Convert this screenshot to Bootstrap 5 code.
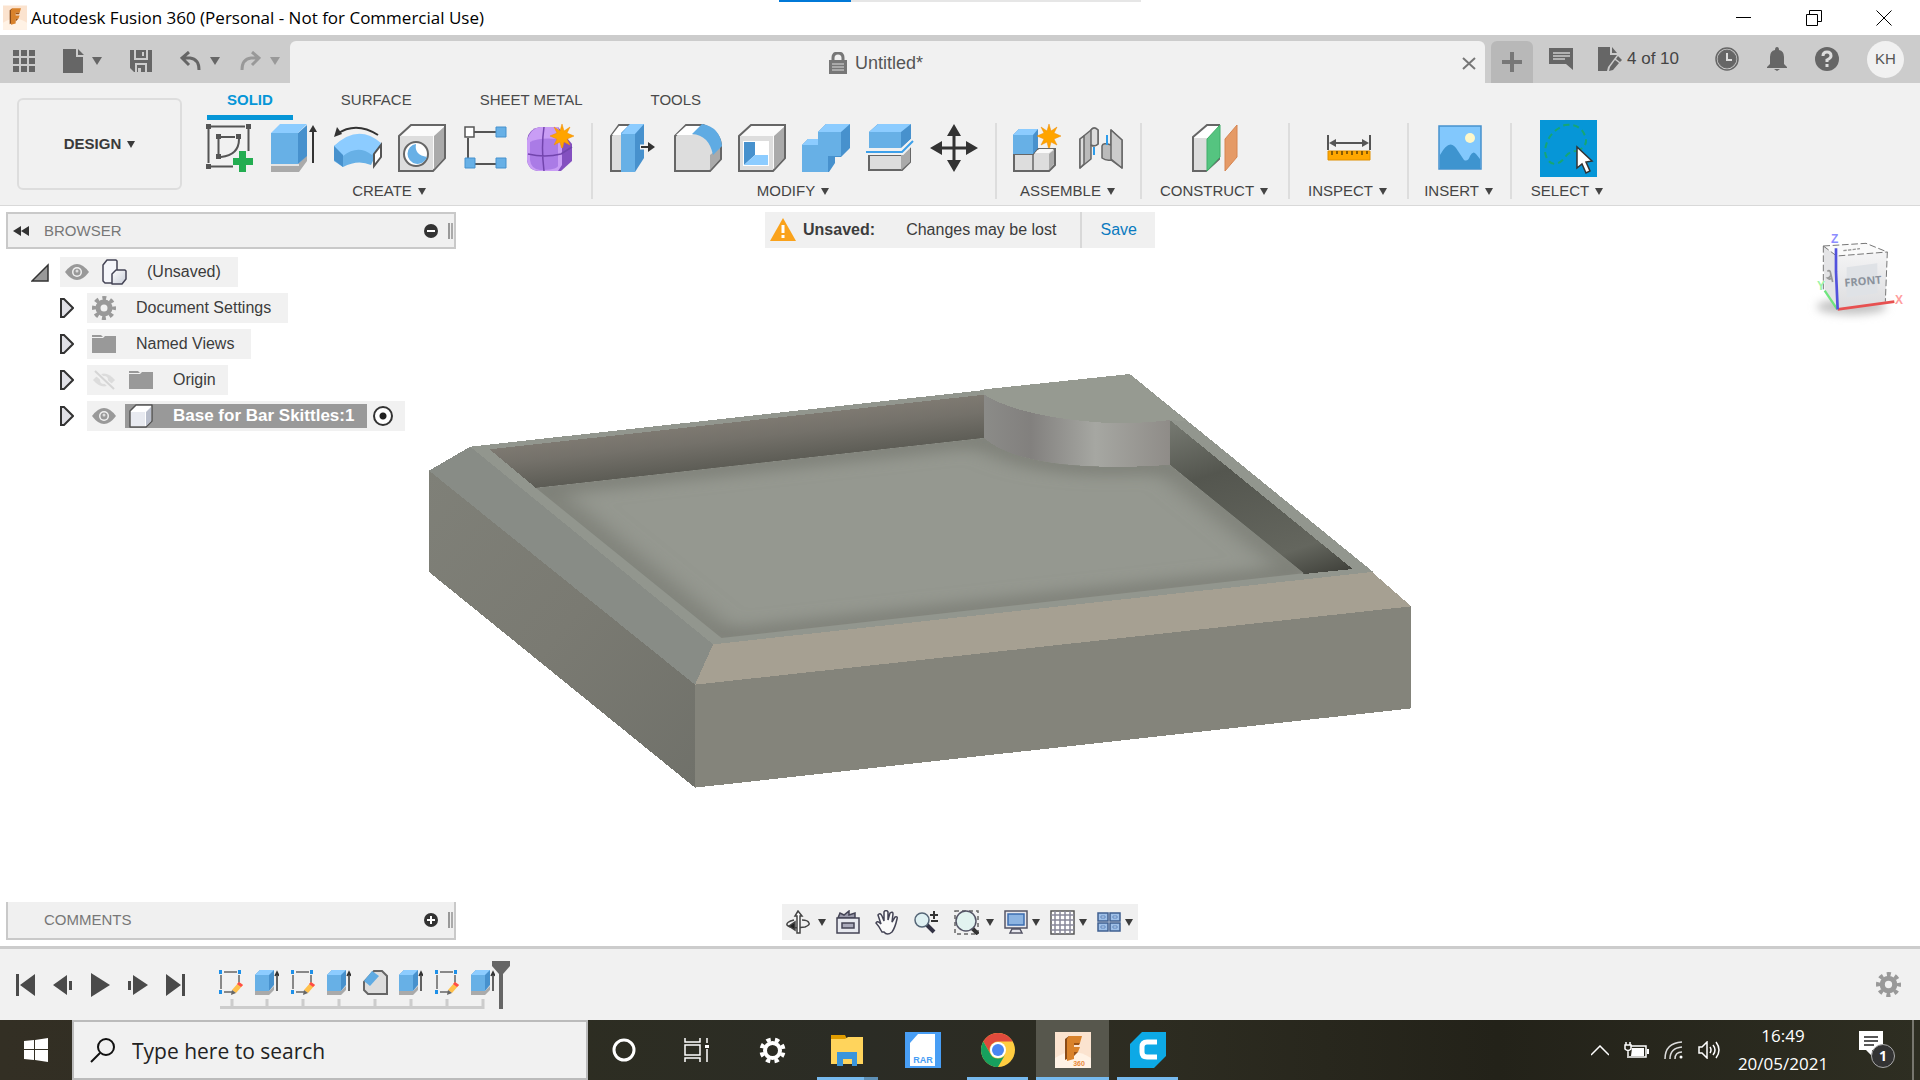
<!DOCTYPE html>
<html lang="en">
<head>
<meta charset="utf-8">
<meta name="viewport" content="width=device-width, initial-scale=1">
<title>Autodesk Fusion 360</title>
<link href="https://cdn.jsdelivr.net/npm/bootstrap@5.3.0/dist/css/bootstrap.min.css" rel="stylesheet">
<style>
body{font-family:"Liberation Sans",Arial,sans-serif;font-size:16px;line-height:20px;color:#3c3c3c;background:#fff;overflow:hidden}
button{border:0;background:none;padding:0;color:inherit;font:inherit;line-height:20px}
svg{display:block;flex:none}
.titlebar{height:35px;font-family:"Open Sans","Noto Sans",sans-serif;font-size:17px;color:#000;padding:0 28px 0 3px}
.loadline{left:779px;width:362px;height:2px;background:#e6e6e6}
.loadline i{display:block;width:72px;height:2px;background:#0078d7}
.winbtns{gap:54px}
.strip{height:48px;background:#ccc;color:#666}
.quick{width:290px;padding:4px 11px 0 12px;gap:28px}
.doctab{margin-top:6px;background:#f1f1f1;border-radius:6px 6px 0 0;font-size:18px;color:#555;padding:2px 9px 0 0}
.plustab{width:42px;height:42px;background:#b8b8b8;border-radius:6px 6px 0 0;margin:6px 16px 0 6px}
.status{gap:28px;padding-right:16px}
.avatar{width:37px;height:37px;background:#f1f1f1;font-size:15px;color:#555}
.ribbon{height:123px;background:#f1f1f1;border-bottom:1px solid #d9d9d9}
.workspace{width:165px;height:92px;margin:15px 5px 0 17px;border:2px solid #ddd;border-radius:6px;font-weight:700;font-size:15px;color:#3a3a3a}
.modes{height:37px;padding-left:20px;gap:28px;font-size:15px;align-items:flex-end}
.modes a{padding:1px 20px 0;line-height:20px;color:#4a4a4a;text-decoration:none;border-bottom:5px solid transparent;display:block;height:31px}
.modes a.on{color:#0696d7;font-weight:700;border-color:#0696d7}
.groups{display:grid;grid-template-columns:404px 404px 145px 148px 119px 103px 114px}
.grp{position:relative}
.grp + .grp::before{content:"";position:absolute;left:0;top:3px;height:76px;width:2px;background:#ddd}
.tools{height:56px;padding-left:2px}
.tools > button{width:64px;height:56px;display:flex;align-items:center;justify-content:center}
.grp > .menu{height:20px;margin-top:5px;font-size:15px;color:#444}
.menu{display:flex;align-items:center;justify-content:center;gap:6px}
.arr{width:0;height:0;border:4px solid transparent;border-top:7px solid currentColor;border-bottom:0;flex:none}
.tools > .picked{background:#0696d7;width:57px;height:57px}
.view{display:grid;grid-template-columns:1fr auto 1fr;padding:6px 0;overflow:hidden}
.model{left:420px;top:154px;z-index:0}
.panelbar{width:450px;height:37px;background:#f0f0f0;border:2px solid #c9c9c9;color:#777;font-size:15px;padding:0 1px 0 5px;margin-left:6px}
.comments{border-top:0;height:38px}
.grip{width:5px;height:16px;border-left:2px solid #999;border-right:2px solid #aaa;margin-left:10px}
.tree{gap:6px;margin-top:8px}
.tree .rowx{display:flex;align-items:center;height:30px;padding-left:60px}
.tree .root{padding-left:31px}
.tag{background:#f1f1f1;height:30px;display:flex;align-items:center;padding-left:5px}
.tw{width:27px}
.sel{background:#999;color:#fff;font-weight:700;font-size:17px;height:24px;display:flex;align-items:center;padding:0 13px 0 4px;margin-left:9px;margin-right:6px}
.dot{appearance:none;width:20px;height:20px;margin:0 12px 0 0;border:2px solid #333;border-radius:50%;background:radial-gradient(#222 0 3px,#fff 4px)}
.notice{width:390px;height:36px;background:#f0f0f0}
.notice a{color:#0a7abf;text-decoration:none;border-left:2px solid #d8d8d8;height:36px;line-height:36px;padding:0 18px 0 19px}
.navtools{height:36px;width:356px;background:#f0f0f0;padding:0 6px 0 4px;gap:10px}
.navtools .wide{margin-right:5px}
.navtools .arr{border-width:7px 4px 0}
.strip .arr{border-width:8px 5px 0}
.timeline{height:74px;background:#f1f1f1;border-top:3px solid #ccc;padding:0 19px 0 16px}
.play{gap:18px;width:203px;padding-top:1px}
.taskbar{height:60px;background:linear-gradient(90deg,#332f24,#2d2d22 30%,#2b2c25 45%,#2d2c21 60%,#232219 78%,#2e2e22);font-family:"Open Sans","Noto Sans",sans-serif;color:#fff}
.startb{width:72px}
.find{width:516px;height:60px;background:#f1f1f1;border:2px solid #bbb;padding-left:16px;gap:17px}
.find input{border:0;background:none;outline:0;font-size:21px;color:#222;min-width:0;padding:2px 0 0}
.find input::placeholder{color:#222;opacity:1}
.app{width:75px;height:60px;display:flex;align-items:center;justify-content:center;position:relative}
.app.sm{width:72px}
.app.run::after{content:"";position:absolute;bottom:0;left:7px;right:7px;height:3px;background:#76b9ed}
.app.multi::after{background:linear-gradient(90deg,#76b9ed 77%,#5d8fb5 77%)}
.app.cur{background:#57574d;width:73px;margin:0 1px}
.app.cur::after{left:0;right:0}
.clock{font-size:17px;line-height:28px;width:92px;margin:0 30px 0 16px}
.peek{width:8px;height:60px;border-left:2px solid #77766e;margin-left:17px}
</style>
<script src="https://cdn.jsdelivr.net/npm/bootstrap@5.3.0/dist/js/bootstrap.bundle.min.js"></script>
</head>
<body class="vh-100 d-flex flex-column">
<svg width="0" height="0" class="position-absolute">
<defs>
<linearGradient id="gb" x1="0" y1="0" x2="1" y2="1"><stop offset="0" stop-color="#fff"/><stop offset="1" stop-color="#c8cdd8"/></linearGradient>
<symbol id="gear" viewBox="0 0 24 24"><g fill="none" stroke="currentColor"><circle cx="12" cy="12" r="6" stroke-width="5"/><circle cx="12" cy="12" r="10" stroke-width="4" stroke-dasharray="3.927" stroke-dashoffset="1.960"/></g></symbol>
<symbol id="eye" viewBox="0 0 24 18"><path d="M0 9Q12-7 24 9Q12 25 0 9Z" fill="#999"/><circle cx="12" cy="9" r="5" fill="#f1f1f1"/><circle cx="12" cy="9" r="3.500" fill="#999"/><circle cx="12" cy="8" r="1.500" fill="#ddd"/></symbol>
<symbol id="folder" viewBox="0 0 24 20"><path d="M0 1h9l2 2H0zM0 4h11l2-2h11v17H0z" fill="#999"/></symbol>
<symbol id="cube" viewBox="0 0 24 24"><path d="M1 7L7 1h16v16l-6 6H1z" fill="#fff" stroke="#555" stroke-width="1.500" stroke-linejoin="round"/><path d="M2 8h14v14H2z" fill="#e8eaf0"/><path d="M17 8l5-5v14l-5 5z" fill="#b9becb"/></symbol>
<symbol id="twist" viewBox="0 0 14 20"><path d="M1 1h3l9 9-9 9H1z" fill="#e0e0e6" stroke="#333" stroke-width="2"/></symbol>
<symbol id="star" viewBox="0 0 24 24"><path d="M12 0l2 7 6-4-3 6 7 3-7 3 3 6-6-3-2 8-2-8-6 3 3-6-7-3 7-3-3-6 6 4z" fill="#ffa400" stroke="#f08a00" stroke-width=".5"/></symbol>
<symbol id="tsk" viewBox="0 0 24 25"><path d="M5 2h13M2 5v14M20 5v10M5 22h8" stroke="#666" stroke-width="1.500" fill="none"/><path d="M0 0h3v4H0zM19 0h3v4h-3zM0 20h3v4H0z" fill="#1e90e8"/><path d="M20 12l4 3-7 8-4-3z" fill="#ffc04a"/><path d="M20 12l4 3-2 2-4-3z" fill="#ff4b4b"/><path d="M13 20l4 3-5 2z" fill="#666"/></symbol>
<symbol id="tex" viewBox="0 0 24 25"><path d="M0 21h14l5-5v4l-5 5H0z" fill="#aaa"/><path d="M0 5l5-5h14v15l-5 6H0z" fill="#4791cd"/><path d="M0 5h14v16H0z" fill="#67b0e6"/><path d="M0 5l5-5h14l-5 5z" fill="#8cccff"/><path d="M22 3v18M20 6l2-4 2 4" stroke="#333" stroke-width="1.500" fill="none"/></symbol>
<symbol id="fus" viewBox="0 0 36 36"><path d="M0 0h36v36H0z" fill="#fbe3cf"/><path d="M0 26Q18 14 36 26V36H0z" fill="#fff2e5"/><path d="M10 7l4-3v22l-4 2z" fill="#8a4b18"/><path d="M14 4h13l-2 7h-6v4h6l-2 5h-4v7l-7 2V7z" fill="#d9822b"/><path d="M19 11h6l-1 2h-5zM19 20h4l-4 4z" fill="#9c5316"/></symbol>
</defs>
</svg>

<header class="titlebar d-flex align-items-center position-relative">
<svg width="24" height="25" class="me-1"><use href="#fus"/></svg>
<span>Autodesk Fusion 360 (Personal - Not for Commercial Use)</span>
<div class="loadline position-absolute top-0"><i></i></div>
<div class="winbtns ms-auto d-flex">
<button aria-label="Minimise"><svg width="16" height="16"><path d="M0 7.500h15" stroke="#000"/></svg></button>
<button aria-label="Restore"><svg width="16" height="16" fill="none" stroke="#000"><path d="M.5 4.500h11v11H.5zM3.500 4V.5h12v11H12"/></svg></button>
<button aria-label="Close"><svg width="16" height="16"><path d="M.5.5l15 15M15.500.5l-15 15" stroke="#000"/></svg></button>
</div>
</header>

<div class="strip d-flex">
<div class="quick d-flex align-items-center">
<button aria-label="Data panel"><svg width="23" height="22" fill="#666"><path d="M1 0h6v6H1zM9 0h6v6H9zM17 0h6v6h-6zM1 8h6v6H1zM9 8h6v6H9zM17 8h6v6h-6zM1 16h6v6H1zM9 16h6v6H9zM17 16h6v6h-6z"/></svg></button>
<button class="d-flex align-items-center" style="gap:8px" aria-label="File"><svg width="21" height="24" fill="#666"><path d="M0 0h13v8h7v16H0zM15 0l6 6h-6z"/></svg><i class="arr"></i></button>
<button aria-label="Save"><svg width="22" height="22"><path d="M0 0h22v22H4l-4-4z" fill="#666"/><path d="M5 0v9h12V0M6 22v-8h10v8" stroke="#ccc" stroke-width="2" fill="none"/><path d="M12 2h2v4h-2zM8 18h3v4H8z" fill="#ccc"/></svg></button>
<div class="d-flex" style="gap:20px">
<button class="d-flex align-items-center" style="gap:9px" aria-label="Undo"><svg width="21" height="20" fill="none" stroke="#666" stroke-width="3"><path d="M9 1L2 7l7 7M2 7h8q9 1 9 12"/></svg><i class="arr"></i></button>
<button class="d-flex align-items-center" style="gap:9px;color:#999" aria-label="Redo"><svg width="21" height="20" fill="none" stroke="#999" stroke-width="3"><path d="M12 1l7 6-7 7M19 7h-8Q2 8 2 19"/></svg><i class="arr"></i></button>
</div>
</div>
<div class="doctab flex-grow-1 d-flex align-items-center">
<div class="flex-grow-1 d-flex align-items-center justify-content-center gap-2">
<svg width="18" height="22"><path d="M4 9V6q0-5 5-5t5 5v3" fill="none" stroke="#777" stroke-width="3"/><path d="M0 8h18v14H0z" fill="#777"/><path d="M3 12h12M3 15h12M3 18h12" stroke="#ddd"/></svg><span>Untitled*</span></div>
<button aria-label="Close tab"><svg width="14" height="13"><path d="M1 1l12 11M13 1L1 12" stroke="#777" stroke-width="2"/></svg></button>
</div>
<button class="plustab d-flex align-items-center justify-content-center" aria-label="New tab"><svg width="20" height="20"><path d="M10 0v20M0 10h20" stroke="#777" stroke-width="4"/></svg></button>
<div class="status d-flex align-items-center">
<svg width="24" height="24" style="margin-right:-3px"><path d="M0 1h24v22l-7-6H0z" fill="#666"/><path d="M4 6h17M4 9h17M4 12h12" stroke="#ccc" stroke-width="1.500"/></svg>
<span class="d-flex align-items-center" style="gap:5px;font-size:17px;color:#444;margin-right:8px"><svg width="24" height="25" fill="#666"><path d="M0 0h12v8h7l-9 12-1 4H0zM14 0l5 6h-5zM20 9l4 4-2 2-4-3zM17 13l4 3-6 7-4 1 1-4z"/></svg>4 of 10</span>
<svg width="24" height="24" fill="none" stroke="#666"><circle cx="12" cy="12" r="11" stroke-width="1.500"/><circle cx="12" cy="12" r="9" fill="#666"/><path d="M12 6v7h5" stroke="#ddd" stroke-width="2"/></svg>
<svg width="20" height="24" fill="#666"><path d="M10 0q2 0 2 3 5 1 5 7v7l3 3v1H0v-1l3-3v-7q0-6 5-7 0-3 2-3zM7 22h6l-3 2z"/></svg>
<svg width="24" height="24"><circle cx="12" cy="12" r="12" fill="#666"/><path d="M8 9q0-4 4-4t4 4q0 2-4 4v2M12 17v3" fill="none" stroke="#ddd" stroke-width="3"/></svg>
<div class="avatar rounded-circle d-flex align-items-center justify-content-center">KH</div>
</div>
</div>

<div class="ribbon d-flex">
<button class="workspace menu"><span>DESIGN</span><i class="arr"></i></button>
<div>
<nav class="modes d-flex"><a href="#" class="on">SOLID</a><a href="#">SURFACE</a><a href="#">SHEET METAL</a><a href="#">TOOLS</a></nav>
<div class="groups">
<div class="grp">
<div class="tools d-flex justify-content-center">
<button aria-label="Create sketch"><svg width="48" height="48"><path d="M5 2.500h34M2.500 5v34M42.500 5v22M5 42.500h22M15 13h14M12.500 15v17M33 15q0 16-18 18" stroke="#555" stroke-width="2" fill="none"/><path d="M0 0h5v5H0zM40 0h5v5h-5zM0 40h5v5H0zM10 10h5v5h-5zM30 10h5v5h-5zM10 30h5v5h-5z" fill="#555"/><path d="M33 27h7v7h7v7h-7v7h-7v-7h-6v-7h6z" fill="#23ad51"/></svg></button>
<button aria-label="Extrude"><svg width="48" height="48"><path d="M1 40h27l9-9v6l-8 11H1z" fill="#aaa"/><path d="M1 40h28v2H1z" fill="#e4e4e4"/><path d="M28 9l9-8v31l-9 8z" fill="#4791cd"/><path d="M1 9h27v31H1z" fill="#67b0e6"/><path d="M1 9l9-9h27l-9 9z" fill="#8cccff"/><path d="M43 6v33" stroke="#333" stroke-width="2"/><path d="M43 1l4 7h-8z" fill="#333"/></svg></button>
<button aria-label="Revolve"><svg width="48" height="48"><path d="M0 22Q24 2 47 20L37 41Q24 35 9 43L0 37z" fill="#67b0e6"/><path d="M0 22Q24-1 47 19L38 31Q24 20 9 32z" fill="#8cccff"/><path d="M0 22l9 9v12l-9-7z" fill="#4791cd"/><path d="M40 30l7-9v12l-7 9z" fill="#fff" stroke="#555" stroke-width="2"/><path d="M3 10Q22-3 44 11" fill="none" stroke="#333" stroke-width="2"/><path d="M0 13l3-10 5 7z" fill="#333"/></svg></button>
<button aria-label="Hole"><svg width="48" height="48"><path d="M1 12L13 1h34v33L35 47H1z" fill="#fafafa" stroke="#666" stroke-width="2"/><path d="M2 12h33v34H2z" fill="#ddd"/><path d="M36 12L46 3v31L36 45z" fill="#aaa"/><circle cx="18" cy="30" r="12" fill="#fff" stroke="#666" stroke-width="2"/><path d="M18 20q-2 11 11 13a10 10 0 1 1-11-13z" fill="#67b0e6"/></svg></button>
<button aria-label="Pattern"><svg width="48" height="48"><path d="M12 8h24M6 14v22M12 40h24" stroke="#555" stroke-width="2"/><path d="M3 3h9v10H3z" fill="#fff" stroke="#555" stroke-width="1.500"/><path d="M34 3h10v10H34zM3 34h10v10H3zM34 34h10v10H34z" fill="#67b0e6" stroke="#4791cd"/></svg></button>
<button aria-label="Create form"><svg width="48" height="48"><path d="M1 16Q2 5 14 3h18l14 17v17L35 47H12Q2 46 1 36z" fill="#8450c0"/><path d="M1 16Q5 4 14 3h18l4 10v28l-4 6H12Q2 46 1 36z" fill="#c99df5"/><path d="M4 18q9-5 28-3v27q-2 4-18 4-9-1-10-10z" fill="#aa7be6"/><path d="M18 3q-3 20 0 44M2 30q17 4 33 0l11-7" stroke="#7245ad" stroke-width="1.500" fill="none"/><svg x="24" y="0" width="24" height="24"><use href="#star"/></svg></svg></button>
</div>
<button class="menu w-100">CREATE<i class="arr"></i></button>
</div>
<div class="grp">
<div class="tools d-flex justify-content-center">
<button aria-label="Press pull"><svg width="48" height="48"><path d="M1 12L9 1h15L14 47H1z" fill="#ddd" stroke="#666" stroke-width="2"/><path d="M2 11l7-9h12l-8 9z" fill="#fff"/><path d="M11 9l9-9h14v34L25 48H11z" fill="#4791cd"/><path d="M11 10h14v38H11z" fill="#67b0e6"/><path d="M11 10l9-10h14l-9 10z" fill="#8cccff"/><path d="M30 23h11" stroke="#f1f1f1" stroke-width="5"/><path d="M31 23h10" stroke="#333" stroke-width="2"/><path d="M38 18l7 5-7 5z" fill="#333"/></svg></button>
<button aria-label="Fillet"><svg width="48" height="48"><path d="M1 12L12 1h17q18 7 18 22v12L36 47H1z" fill="#ddd" stroke="#666" stroke-width="2"/><path d="M36 31l10-8v12L36 46z" fill="#aaa"/><path d="M2 11L12 2h15l-9 9z" fill="#fff"/><path d="M18 10L28 0q18 3 20 22l-9 9Q35 11 18 10z" fill="#5fabe3"/></svg></button>
<button aria-label="Shell"><svg width="48" height="48"><path d="M1 12L13 1h34v33L35 47H1z" fill="#fafafa" stroke="#666" stroke-width="2"/><path d="M2 12h33v34H2z" fill="#ddd"/><path d="M36 12L46 3v31L36 45z" fill="#aaa"/><path d="M5 17h26v25H5z" fill="#fff"/><path d="M6 18h11v13L6 41z" fill="#4791cd"/><path d="M17 31h13v10H6z" fill="#8cccff"/></svg></button>
<button aria-label="Combine"><svg width="48" height="48"><path d="M0 21l6-6h10V8l8-8h24v24l-9 9h-6v6l-6 9H0z" fill="#4791cd"/><path d="M0 21h16V8h23v24H26v16H0z" fill="#67b0e6"/><path d="M16 8l8-8h24l-9 8zM0 21l6-6h10v6z" fill="#8cccff"/></svg></button>
<button aria-label="Split body"><svg width="48" height="48"><path d="M3 31h32l9-9v16l-8 8H3z" fill="#ddd" stroke="#666" stroke-width="2"/><path d="M35 31l9-8v15l-9 8z" fill="#aaa"/><path d="M3 8l9-8h33v15l-10 9H3z" fill="#4791cd"/><path d="M3 8h32v16H3z" fill="#67b0e6"/><path d="M3 8l9-8h33l-10 8z" fill="#8cccff"/><path d="M0 28h36l11-11" fill="none" stroke="#f1f1f1" stroke-width="6"/><path d="M0 28h36l11-11" fill="none" stroke="#3da0ea" stroke-width="2"/></svg></button>
<button aria-label="Move"><svg width="48" height="48"><path d="M24 6v36M6 24h36" stroke="#333" stroke-width="3"/><path d="M24 0l7 12H17zM24 48l7-12H17zM0 24l12-7v14zM48 24l-12-7v14z" fill="#333"/></svg></button>
</div>
<button class="menu w-100">MODIFY<i class="arr"></i></button>
</div>
<div class="grp">
<div class="tools d-flex justify-content-center">
<button aria-label="New component"><svg width="48" height="48"><path d="M1 30h19l4-5h18v16l-6 6H1z" fill="#ddd" stroke="#666" stroke-width="2"/><path d="M20 30v17" stroke="#666" stroke-width="1.500"/><path d="M36 30l5-4v14l-5 6z" fill="#aaa"/><path d="M22 29l4-4h15l-5 4z" fill="#fafafa"/><path d="M0 11l6-6h19v19l-5 6H0z" fill="#4791cd"/><path d="M0 11h20v19H0z" fill="#67b0e6"/><path d="M0 11l6-6h19l-5 6z" fill="#8cccff"/><svg x="24" y="0" width="24" height="24"><use href="#star"/></svg></svg></button>
<button aria-label="Joint"><svg width="48" height="48"><g stroke="#666" stroke-width="1.500" stroke-linejoin="round"><path d="M3 15L14 6q3-4 7 0v14q-3 3-7 1v14L3 44z" fill="#bbb"/><path d="M3 15l4-3v28l-4 4z" fill="#ddd"/><path d="M14 6q3-4 7 0v14q-3 3-7 1z" fill="#ddd"/><path d="M45 16L34 6v15q-8-3-9 1v12q4 3 9 2l11 8z" fill="#bbb"/><path d="M34 6l11 10v28l-11-9z" fill="#ccc"/></g><path d="M17 23v8M30 11v10" stroke="#2d9cea" stroke-width="2"/></svg></button>
</div>
<button class="menu w-100">ASSEMBLE<i class="arr"></i></button>
</div>
<div class="grp">
<div class="tools d-flex justify-content-center">
<button aria-label="Offset plane"><svg width="46" height="48"><path d="M1 13L15 1h12v34L14 47H1z" fill="#fff" stroke="#666" stroke-width="2"/><path d="M2 14h13v32H2z" fill="#ddd"/><path d="M15 15L28 1v32L15 47z" fill="#55c480" stroke="#3fae68"/><path d="M33 15L45 1v32L33 47z" fill="#e59a66" stroke="#d68450"/></svg></button>
</div>
<button class="menu w-100">CONSTRUCT<i class="arr"></i></button>
</div>
<div class="grp">
<div class="tools d-flex justify-content-center">
<button aria-label="Measure"><svg width="44" height="48"><path d="M1 11v15M43 11v15M4 19h36" stroke="#555" stroke-width="2"/><path d="M2 19l7-4v8zM42 19l-7-4v8z" fill="#555"/><path d="M1 27h42v9H1z" fill="#ffa700" stroke="#e08f00"/><path d="M5 27v4M10 27v3M15 27v4M20 27v3M25 27v4M30 27v3M35 27v4M40 27v3" stroke="#664400" stroke-width="1.500"/></svg></button>
</div>
<button class="menu w-100">INSPECT<i class="arr"></i></button>
</div>
<div class="grp">
<div class="tools d-flex justify-content-center">
<button aria-label="Insert image"><svg width="44" height="46"><path d="M1 1h42v43H1z" fill="#82c8fd" stroke="#4791cd" stroke-width="1.500"/><circle cx="32" cy="13" r="5" fill="#fdf7c9"/><path d="M2 30Q12 11 20 26l6 9q4 2 6-4 3-6 6-2l4 5v10H2z" fill="#3e94cf"/></svg></button>
</div>
<button class="menu w-100">INSERT<i class="arr"></i></button>
</div>
<div class="grp">
<div class="tools d-flex justify-content-center">
<button class="picked" aria-label="Select"><svg width="57" height="57"><path d="M37 31q10-4 9-12Q42 3 25 5 6 13 5 32q2 12 11 12 6-2 10-8 4-5 11-5z" fill="none" stroke="#17a673" stroke-width="2" stroke-dasharray="6 4"/><path d="M37 27v21l5-4 4 9 4-2-4-9 6-1z" fill="#fff" stroke="#333" stroke-width="1.500"/></svg></button>
</div>
<button class="menu w-100">SELECT<i class="arr"></i></button>
</div>
</div>
</div>
</div>

<main class="view flex-grow-1 position-relative">
<svg class="model position-absolute" width="1010" height="440" viewBox="0 0 1568 1320" preserveAspectRatio="none" shape-rendering="crispEdges">
<defs>
<linearGradient id="m1" x1="0" y1="0" x2="1" y2="1"><stop offset="0" stop-color="#7f8078"/><stop offset=".5" stop-color="#7a7a72"/><stop offset="1" stop-color="#70716a"/></linearGradient>
<linearGradient id="m2" gradientUnits="userSpaceOnUse" x1="470" y1="180" x2="500" y2="325"><stop offset="0" stop-color="#807b73"/><stop offset=".4" stop-color="#74716a"/><stop offset="1" stop-color="#5a5a53"/></linearGradient>
<linearGradient id="m3"><stop offset="0" stop-color="#8b8b88"/><stop offset=".25" stop-color="#82807e"/><stop offset=".6" stop-color="#a6a7a2"/><stop offset="1" stop-color="#8f8c88"/></linearGradient>
<linearGradient id="m4" gradientUnits="userSpaceOnUse" x1="1165" y1="200" x2="1440" y2="640"><stop offset="0" stop-color="#74776f"/><stop offset=".3" stop-color="#54564f"/><stop offset=".8" stop-color="#64665e"/><stop offset="1" stop-color="#3e3f39"/></linearGradient>
<filter id="soft"><feGaussianBlur stdDeviation="22"/></filter>
<clipPath id="fl"><path d="M180 384L876 234Q930 320 1080 320L1164 314 1372 640 468 834z"/></clipPath>
</defs>
<path d="M14 332L427 974V1283L14 636z" fill="url(#m1)"/>
<path d="M427 974L1539 739V1045L427 1283z" fill="#84847b"/>
<path d="M78 260L1102 42 1480 636 455 853z" fill="#92968e"/>
<path d="M78 260L455 853 427 974 14 332z" fill="#888c86"/>
<path d="M455 853L1478 636 1539 739 427 974z" fill="#a6a092"/>
<path d="M108 268L876 104V234L180 384z" fill="url(#m2)"/>
<path d="M1164 180L1448 627 1372 642 1164 314z" fill="url(#m4)"/>
<g clip-path="url(#fl)"><path d="M100 100H1500V900H100z" fill="#959890"/><path d="M180 384L876 234Q930 320 1080 320L1164 314 1372 640 468 834z" fill="none" stroke="#7b7e76" stroke-width="46" filter="url(#soft)"/></g>
<path d="M876 104L1164 180V314Q1120 322 1060 320 920 312 876 234z" fill="url(#m3)"/>
<path d="M876 88L1102 42 1190 184 1164 180Q1120 192 1060 188 930 170 876 104z" fill="#969a91"/>
</svg>
<section class="d-flex flex-column position-relative z-1" style="min-width:0">
<div class="panelbar d-flex align-items-center">
<svg width="17" height="10" fill="#333"><path d="M0 5l8-5v10zM8 5l8-5v10z"/></svg>
<span style="margin-left:14px">BROWSER</span>
<svg class="ms-auto" width="14" height="14"><circle cx="7" cy="7" r="7" fill="#333"/><path d="M3 7h8" stroke="#fff" stroke-width="2"/></svg>
<i class="grip"></i>
</div>
<div class="tree d-flex flex-column">
<div class="rowx root"><svg width="18" height="19" style="margin-right:11px"><path d="M1 18L17 2v16z" fill="#999" stroke="#333" stroke-width="1.500"/></svg><div class="tag" style="padding-right:17px"><svg width="24" height="18"><use href="#eye"/></svg><svg width="26" height="26" style="margin:0 20px 0 12px" stroke="#445" stroke-width="1.500" stroke-linejoin="round"><path d="M2 6l4-5h9l1 1v12l-4 10H4l-2-2z" fill="#f5f6fa"/><path d="M11 15l4-4h9l1 1v8l-4 5H11z" fill="url(#gb)"/></svg>(Unsaved)</div></div>
<div class="rowx"><button class="tw" aria-label="Expand"><svg width="14" height="20"><use href="#twist"/></svg></button><div class="tag" style="padding-right:17px"><svg width="24" height="24" color="#999" style="margin-right:20px"><use href="#gear"/></svg>Document Settings</div></div>
<div class="rowx"><button class="tw" aria-label="Expand"><svg width="14" height="20"><use href="#twist"/></svg></button><div class="tag" style="padding-right:17px"><svg width="24" height="20" style="margin-right:20px"><use href="#folder"/></svg>Named Views</div></div>
<div class="rowx"><button class="tw" aria-label="Expand"><svg width="14" height="20"><use href="#twist"/></svg></button><div class="tag" style="padding-right:12px"><svg width="24" height="20"><path d="M1 10Q12-3 23 10 12 23 1 10z" fill="#dcdcdc"/><circle cx="12" cy="10" r="4" fill="#f1f1f1"/><path d="M2 1l20 18" stroke="#f1f1f1" stroke-width="5"/><path d="M3 1l19 18" stroke="#d5d5d5" stroke-width="2"/></svg><svg width="24" height="20" style="margin:0 20px 0 13px"><use href="#folder"/></svg>Origin</div></div>
<div class="rowx"><button class="tw" aria-label="Expand"><svg width="14" height="20"><use href="#twist"/></svg></button><div class="tag"><svg width="24" height="18"><use href="#eye"/></svg><label class="sel" for="act"><svg width="24" height="24" style="margin-right:20px"><use href="#cube"/></svg>Base for Bar Skittles:1</label><input class="dot" type="radio" id="act" checked></div></div>
</div>
<div class="panelbar comments d-flex align-items-center mt-auto">
<span style="margin-left:31px">COMMENTS</span>
<svg class="ms-auto" width="14" height="14"><circle cx="7" cy="7" r="7" fill="#333"/><path d="M3 7h8M7 3v8" stroke="#fff" stroke-width="2"/></svg>
<i class="grip"></i>
</div>
</section>
<section class="d-flex flex-column align-items-center justify-content-between position-relative z-1">
<div class="notice d-flex align-items-center">
<svg width="26" height="24" style="margin:0 7px 0 5px"><path d="M13 0l13 23H0z" fill="#faa21b"/><path d="M13 7v8M13 17v3" stroke="#fff" stroke-width="3"/></svg>
<b>Unsaved:</b><span class="ms-auto me-auto ps-2">Changes may be lost</span><a href="#">Save</a>
</div>
<div class="navtools d-flex align-items-center">
<button class="d-flex align-items-center gap-2" aria-label="Orbit"><svg width="24" height="24" fill="none" stroke="#444" stroke-width="1.500"><path d="M8 10q-8 2-7 5 3 4 18 2 5-2 4-4-1-3-7-3"/><path d="M11 23V6H9l3-5 4 5h-2v17z" fill="#fff"/><path d="M3 16l6-4v8z" fill="#222"/></svg><i class="arr"></i></button>
<button class="wide" aria-label="Look at"><svg width="24" height="24" fill="#e8eaf0" stroke="#445" stroke-width="1.500"><path d="M2 8l2-5 4 2 5-4v4l6-2v5z" fill="#99a"/><path d="M1 8h22v15H1z"/><path d="M6 13h12v5H6z" fill="#aab"/></svg></button>
<button class="wide" aria-label="Pan"><svg width="24" height="25"><path d="M7 22q-3-6-6-9 1-3 5 1L3 5q2-3 4 1l2 5V2q2-3 4 0v8l2-7q3-2 3 1l-1 8 3-5q3-1 2 2-2 9-5 13-5 4-8 0z" fill="#fafafa" stroke="#445" stroke-width="1.500"/></svg></button>
<button class="wide" aria-label="Zoom"><svg width="25" height="24"><path d="M13 15l7 7" stroke="#334" stroke-width="4"/><circle cx="8" cy="10" r="7" fill="#dff0f2" stroke="#567" stroke-width="1.500"/><path d="M20 1v8M16 5h8M17 11h7" stroke="#333" stroke-width="2"/></svg></button>
<button class="d-flex align-items-center" style="gap:7px" aria-label="Fit"><svg width="25" height="25"><path d="M1 1h23v23H1z" fill="none" stroke="#666" stroke-width="1.500" stroke-dasharray="4 3"/><path d="M17 17l7 7" stroke="#333" stroke-width="4"/><circle cx="12" cy="11" r="10" fill="#e2f3f0" stroke="#556" stroke-width="1.500"/></svg><i class="arr"></i></button>
<button class="d-flex align-items-center gap-1" aria-label="Display settings"><svg width="24" height="24"><path d="M1 1h22v17H1zM8 19h8l2 4H6z" fill="#e8e8ee" stroke="#556" stroke-width="1.500"/><path d="M4 4h16v11H4z" fill="#8db4e2" stroke="#3b6cb0" stroke-width="1.500"/></svg><i class="arr"></i></button>
<button class="d-flex align-items-center" style="gap:4px" aria-label="Grid"><svg width="25" height="25"><path d="M1 1h23v23H1z" fill="#fff" stroke="#555" stroke-width="1.500"/><path d="M5 1v23M10 1v23M15 1v23M20 1v23M1 5h23M1 10h23M1 15h23M1 20h23" stroke="#889" stroke-width="1.500"/></svg><i class="arr"></i></button>
<button class="d-flex align-items-center" style="gap:4px" aria-label="Viewports"><svg width="24" height="20"><path d="M1 1h10v8H1zM13 1h10v8H13zM1 11h10v8H1zM13 11h10v8H13z" fill="#9fc0e8" stroke="#3f5f90" stroke-width="1.500"/><path d="M4 4h4v2H4zM16 4h4v2h-4zM4 14h4v2H4zM16 14h4v2h-4z" fill="#cfe0f5" stroke="#5f86bd"/></svg><i class="arr"></i></button>
</div>
</section>
<section class="position-relative z-1 d-flex justify-content-end align-items-start">
<svg width="140" height="120" viewBox="0 6 420 360" role="img" aria-label="View cube">
<defs><filter id="sh" x="-20%" y="-60%" width="140%" height="220%"><feGaussianBlur stdDeviation="12"/></filter><linearGradient id="vc" x2="0" y2="1"><stop offset="0" stop-color="#f4f4f5"/><stop offset="1" stop-color="#dcdcde"/></linearGradient></defs>
<ellipse cx="215" cy="290" rx="105" ry="24" fill="#c4c4c4" filter="url(#sh)"/>
<path d="M130 108L170 138 173 298 134 240z" fill="#e4e4e6"/><path d="M130 108L258 100 322 126 170 138z" fill="#fafafa"/><path d="M170 138L322 126 316 275 173 298z" fill="url(#vc)"/><path d="M200 172l92-12v90l-92 12z" fill="#dfe2e6"/>
<path d="M130 108L258 100 322 126 316 275M130 108v130M130 108l40 30 152-12" fill="none" stroke="#777" stroke-width="3" stroke-dasharray="20 8"/>
<path d="M190 122l50-6" stroke="#999" stroke-width="4" stroke-dasharray="10 4"/>
<path d="M134 242l38 56" stroke="#6fe57e" stroke-width="7"/><path d="M173 298l170-23" stroke="#e75050" stroke-width="8"/><path d="M168 115v70l5 113" stroke="#5252dd" stroke-width="8" fill="none"/>
<g font-family="Liberation Sans" font-weight="700" font-size="36"><text x="153" y="98" fill="#8d8dff">Z</text><text x="345" y="281" fill="#ff9d9d">X</text><text x="111" y="240" fill="#9cf5a5">Y</text></g>
<text x="194" y="230" font-family="Open Sans" font-weight="700" font-size="33" fill="#8b929c" transform="rotate(-5 194 230)">FRONT</text>
<path d="M142 184q8-6 10 6t-10 14q8 8 14-2M152 190l6 26" stroke="#999" stroke-width="5" fill="none"/>
</svg>
</section>
</main>

<footer class="timeline d-flex align-items-center">
<div class="play d-flex align-items-center">
<button aria-label="To start"><svg width="19" height="22" fill="#4a4a4a"><path d="M0 0h3v22H0zM19 0v22L4 11z"/></svg></button>
<button aria-label="Step back"><svg width="20" height="20" fill="#4a4a4a"><path d="M14 0v20L0 10zM16 6h3v9h-3z"/></svg></button>
<button aria-label="Play"><svg width="19" height="24" fill="#4a4a4a"><path d="M0 0l19 12L0 24z"/></svg></button>
<button aria-label="Step forward"><svg width="20" height="20" fill="#4a4a4a"><path d="M5 0l15 10L5 20zM0 6h3v9H0z"/></svg></button>
<button aria-label="To end"><svg width="19" height="22" fill="#4a4a4a"><path d="M16 0h3v22h-3zM0 0l15 11L0 22z"/></svg></button>
</div>
<svg width="292" height="48" role="img" aria-label="Timeline">
<path d="M1 46.500h264M13 38v10M48 38v10M84 38v10M120 38v10M156 38v10M192 38v10M228 38v10M264 38v10" stroke="#ccc" stroke-width="3"/>
<g><svg x="0" y="9" width="24" height="25"><use href="#tsk"/></svg><svg x="36" y="9" width="24" height="25"><use href="#tex"/></svg><svg x="72" y="9" width="24" height="25"><use href="#tsk"/></svg><svg x="108" y="9" width="24" height="25"><use href="#tex"/></svg>
<path d="M145 21l10-11h8l5 5v18h-19l-4-4z" fill="#ddd" stroke="#666" stroke-width="2"/><path d="M145 20l8-10 7 5-9 10z" fill="#5fabe3"/>
<svg x="180" y="9" width="24" height="25"><use href="#tex"/></svg><svg x="216" y="9" width="24" height="25"><use href="#tsk"/></svg><svg x="252" y="9" width="24" height="25"><use href="#tex"/></svg></g>
<path d="M273 0h18v5l-7 8v35h-4V13l-7-8z" fill="#666"/>
</svg>
<button class="ms-auto" aria-label="Settings" style="color:#999"><svg width="25" height="25"><use href="#gear"/></svg></button>
</footer>

<div class="taskbar d-flex align-items-center">
<button class="startb d-flex justify-content-center" aria-label="Start"><svg width="24" height="24" fill="#fff"><path d="M0 3l10-1v9H0zM11 2l13-2v11H11zM0 12h10v10L0 21zM11 12h13v12l-13-2z"/></svg></button>
<div class="find d-flex align-items-center">
<svg width="25" height="25" fill="none" stroke="#111" stroke-width="2"><circle cx="16" cy="9" r="8"/><path d="M10 15l-9 9"/></svg>
<input class="flex-grow-1" type="text" placeholder="Type here to search" aria-label="Type here to search">
</div>
<button class="app sm" aria-label="Cortana"><svg width="24" height="24"><circle cx="12" cy="12" r="10" fill="none" stroke="#fff" stroke-width="3"/></svg></button>
<button class="app sm" aria-label="Task view"><svg width="25" height="24" fill="none" stroke="#fff" stroke-width="1.500"><path d="M1 0v4h15V0M1 24v-4h15v4M1 7h15v10H1zM23 0v5M23 11v13"/><path d="M21 7h4v3h-4z" fill="#fff" stroke="none"/></svg></button>
<button class="app" style="margin-left:3px" aria-label="Settings"><svg width="27" height="27" viewBox="0 0 27 27" fill="none" stroke="#fff"><circle cx="13.500" cy="13.500" r="7.500" stroke-width="4"/><circle cx="13.500" cy="13.500" r="11" stroke-width="4" stroke-dasharray="4.320" stroke-dashoffset="-2.160"/></svg></button>
<button class="app run multi" aria-label="File Explorer"><svg width="33" height="32"><path d="M0 1h14l2 4H0z" fill="#e09c00"/><path d="M0 5h14l3-2h15v27H0z" fill="#ffd45c"/><path d="M6 32V18h20v14h-5v-7h-9v7z" fill="#3a95dc"/></svg></button>
<button class="app" aria-label="RAR"><svg width="36" height="36"><path d="M0 0h36v36H0z" fill="#489ef5"/><path d="M13 2h17v32H5V11z" fill="#fff"/><text x="18" y="31" font-family="Liberation Sans" font-weight="700" font-size="9" text-anchor="middle" fill="#489ef5">RAR</text></svg></button>
<button class="app run" aria-label="Chrome"><svg width="34" height="34" viewBox="0 0 34 34"><circle cx="17" cy="17" r="17" fill="#ffcd40"/><path d="M2.300 8.500A17 17 0 0 1 31.700 8.500H17a8.500 8.500 0 0 0-7.400 12.700z" fill="#e04a3c"/><path d="M2.300 8.500A17 17 0 0 0 17 34l7.400-12.800a8.500 8.500 0 0 1-14.800 0z" fill="#17a05e"/><circle cx="17" cy="17" r="8" fill="#fff"/><circle cx="17" cy="17" r="6" fill="#4a86f0"/></svg></button>
<button class="app run cur" aria-label="Fusion 360"><svg width="36" height="36"><use href="#fus"/><text x="24" y="34" font-family="Liberation Sans" font-weight="700" font-size="7" text-anchor="middle" fill="#e88a3c">360</text></svg></button>
<button class="app run" aria-label="Cura"><svg width="36" height="36"><path d="M12 0h24v24L24 36H0V12z" fill="#0da9e6"/><path d="M27 10H17q-5 0-5 5v5q0 5 5 5h10" fill="none" stroke="#fff" stroke-width="5"/></svg></button>
<div class="ms-auto d-flex align-items-center" style="gap:15px">
<svg width="18" height="11"><path d="M0 10l9-9 9 9" fill="none" stroke="#fff" stroke-width="1.500"/></svg>
<svg width="25" height="17" fill="none" stroke="#fff"><path d="M7 4h15v11H5" stroke-width="1.500"/><path d="M8 6h12v8H7zM23 7h2v5h-2z" fill="#fff" stroke="none"/><path d="M2 0v3M6 0v3M1 3h6v4q-3 3-6 0zM4 9v7" stroke-width="1.500"/></svg>
<svg width="19" height="18" fill="none" stroke="#ddd" stroke-width="1.500"><path d="M1 18Q1 2 18 1M6 18q0-11 12-12M11 18q0-7 7-7"/><circle cx="17" cy="16" r="1.500" fill="#fff" stroke="none"/></svg>
<svg width="23" height="18" fill="none" stroke="#fff" stroke-width="1.500"><path d="M1 6h3l5-5v16l-5-5H1zM12 6q2 3 0 6M15 4q4 5 0 10M18 1q6 8 0 16"/></svg>
</div>
<div class="clock text-center">16:49<br>20/05/2021</div>
<button aria-label="Notifications"><svg width="36" height="38"><path d="M0 0h24v19H13v6l-6-6H0z" fill="#fff"/><path d="M5 6h14M5 10h14M5 14h10" stroke="#222" stroke-width="1.500"/><circle cx="24" cy="25" r="11.500" fill="#333" stroke="#aaa"/><text x="24" y="30" font-family="Noto Sans" font-weight="700" font-size="14" text-anchor="middle" fill="#fff">1</text></svg></button>
<i class="peek"></i>
</div>
</body>
</html>
